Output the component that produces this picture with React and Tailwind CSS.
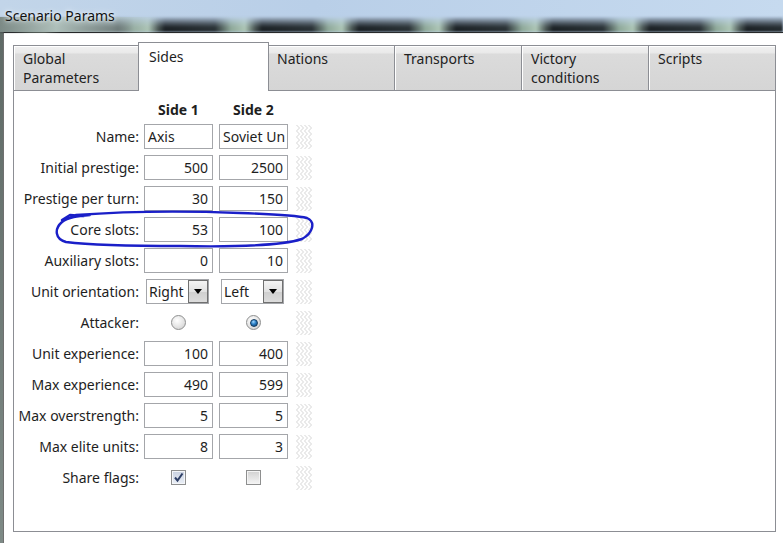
import React from 'react';

const tabs = [
    { id: 'global', lines: ['Global', 'Parameters'] },
    { id: 'sides', lines: ['Sides'] },
    { id: 'nations', lines: ['Nations'] },
    { id: 'transports', lines: ['Transports'] },
    { id: 'victory', lines: ['Victory', 'conditions'] },
    { id: 'scripts', lines: ['Scripts'] },
];

const rows = [
    { label: 'Name:', type: 'text', a: 'Axis', b: 'Soviet Un' },
    { label: 'Initial prestige:', type: 'num', a: '500', b: '2500' },
    { label: 'Prestige per turn:', type: 'num', a: '30', b: '150' },
    { label: 'Core slots:', type: 'num', a: '53', b: '100' },
    { label: 'Auxiliary slots:', type: 'num', a: '0', b: '10' },
    { label: 'Unit orientation:', type: 'select', a: 'Right', b: 'Left' },
    { label: 'Attacker:', type: 'radio', a: false, b: true },
    { label: 'Unit experience:', type: 'num', a: '100', b: '400' },
    { label: 'Max experience:', type: 'num', a: '490', b: '599' },
    { label: 'Max overstrength:', type: 'num', a: '5', b: '5' },
    { label: 'Max elite units:', type: 'num', a: '8', b: '3' },
    { label: 'Share flags:', type: 'check', a: true, b: false },
];

const Grip = () => (
    <svg width="18" height="25" viewBox="0 0 18 25" className="block">
        {[3, 7, 11, 15].map((x) => (
            <polyline
                key={x}
                points={Array.from({ length: 9 }, (_, i) => `${x + (i % 2 ? 1.5 : -1.5)},${1 + i * 3}`).join(' ')}
                fill="none"
                stroke="#d6d6d6"
                strokeWidth="1"
            />
        ))}
    </svg>
);

const TextBox = ({ value, left }) => (
    <div
        className={`h-[25px] w-[69px] border border-[#a4a6aa] bg-white overflow-hidden whitespace-nowrap leading-[23px] ${left ? 'pl-[3px] text-left' : 'pr-[4px] text-right'}`}
    >
        {value}
    </div>
);

const Select = ({ value }) => (
    <div className="pl-[2px] pr-[4px]">
        <div className="h-[25px] w-[63px] border border-[#a4a6aa] bg-white flex items-stretch">
            <div className="flex-1 pl-[2px] leading-[23px] overflow-hidden whitespace-nowrap">{value}</div>
            <div className="w-[20px] border border-[#707070] bg-[linear-gradient(#f4f4f4,#e2e2e2_50%,#cfcfcf_51%,#dcdcdc)] flex items-center justify-center">
                <svg width="8" height="5" viewBox="0 0 8 5">
                    <path d="M0 0 H8 L4 5 Z" fill="#000" />
                </svg>
            </div>
        </div>
    </div>
);

const Radio = ({ checked }) => (
    <div className="w-[69px] flex justify-center">
        <div className="w-[15px] h-[15px] rounded-full border border-[#8e8f8f] bg-[radial-gradient(circle_at_40%_35%,#ffffff,#e4e4e4_55%,#c9c9c9)] flex items-center justify-center">
            {checked && (
                <div className="w-[8px] h-[8px] rounded-full bg-[radial-gradient(circle_at_40%_30%,#9fd6ff,#2a7fc6_45%,#0c3a68)] border border-[#133b60]" />
            )}
        </div>
    </div>
);

const Check = ({ checked }) => (
    <div className="w-[69px] flex justify-center">
        <div className={`w-[15px] h-[15px] border border-[#8e8f8f] p-[1px] ${checked ? 'bg-[#f4f6f9]' : 'bg-[#f4f4f4]'}`}>
            <div className={`w-full h-full flex items-center justify-center ${checked ? 'bg-[linear-gradient(#cbd3e2,#e8edf5)]' : 'bg-[linear-gradient(#d4d4d4,#f2f2f2)]'}`}>
                {checked && (
                    <svg width="11" height="11" viewBox="0 0 11 11">
                        <path d="M2 5.5 L4.5 8.5 L9.5 1.5" fill="none" stroke="#2e3f66" strokeWidth="2" />
                    </svg>
                )}
            </div>
        </div>
    </div>
);

const Cell = ({ row, v }) => {
    if (row.type === 'text') return <TextBox value={v} left />;
    if (row.type === 'num') return <TextBox value={v} />;
    if (row.type === 'select') return <Select value={v} />;
    if (row.type === 'radio') return <Radio checked={v} />;
    return <Check checked={v} />;
};

export default function App() {
    return (
        <div className="relative w-[783px] h-[543px] overflow-hidden bg-white font-['Noto_Sans',sans-serif] text-[14px] text-[#1e1e1e] flex flex-col">
            {/* title bar */}
            <div className="relative h-[32px] shrink-0 bg-[linear-gradient(90deg,#c2d5e9,#b9cfe8_40%,#c6daef_100%)]">
                <div className="absolute left-0 right-0 bottom-0 h-[15px] bg-[linear-gradient(rgba(188,209,233,0.9),rgba(188,209,233,0.25)_45%,rgba(188,209,233,0)_70%),repeating-linear-gradient(90deg,#1c2226_0px,#2a3236_50px,#8fa99a_66px,#adc6b6_80px,#4a5654_90px,#1c2226_97px)] bg-position-[68px_0] blur-[1px]" />
                <div className="absolute left-0 bottom-0 w-[160px] h-[15px] bg-[linear-gradient(90deg,#7c8a86,#aebfba_35%,rgba(174,191,186,0.6)_70%,rgba(174,191,186,0))]" />
                <div className="relative pl-[5px] pt-[6px] leading-[20px] text-[#111] [text-shadow:0_0_6px_#e8f0f8,0_0_3px_#e8f0f8]">Scenario Params</div>
            </div>

            <div className="flex-1 flex">
                <div className="w-[3px] bg-[linear-gradient(#5f6a66,#7e8a86)]" />
                <div className="flex-1 border-l border-t border-l-[#707070] border-t-[#2a2a2a] bg-white pl-[9px] pr-[7px] pt-[9px] flex flex-col">
                    {/* tab strip */}
                    <div className="flex items-end h-[48px]">
                        {tabs.map((t, i) => {
                            const sel = t.id === 'sides';
                            return sel ? (
                                <div
                                    key={t.id}
                                    className="relative z-10 -mx-[2px] -mb-px w-[131px] h-[49px] border border-b-0 border-[#8c8e94] bg-white pl-[10px] pt-[4px] leading-[19px]"
                                >
                                    {t.lines.map((l) => <div key={l}>{l}</div>)}
                                </div>
                            ) : (
                                <div
                                    key={t.id}
                                    className={`h-[45px] ${i === tabs.length - 1 ? 'w-[128px] border-r' : 'w-[127px]'} border-t border-l border-[#8c8e94] bg-[linear-gradient(#f1f1f1,#e9e9e9_16%,#dbdbdb_18%,#d5d5d5)] shadow-[inset_1px_1px_0_#ffffff] pl-[9px] pt-[3px] leading-[19px] text-[#222]`}
                                >
                                    {t.lines.map((l) => <div key={l}>{l}</div>)}
                                </div>
                            );
                        })}
                    </div>

                    {/* panel */}
                    <div className="h-[442px] border border-[#8c8e94] bg-white pt-[9px]">
                        <div className="flex h-[20px] items-center font-bold leading-[20px]">
                            <div className="w-[125px]" />
                            <div className="ml-[5px] w-[69px] text-center">Side 1</div>
                            <div className="ml-[6px] w-[69px] text-center">Side 2</div>
                        </div>
                        <div className="mt-[4px] flex flex-col gap-[6px]">
                            {rows.map((r) => (
                                <div key={r.label} className="flex h-[25px] items-center">
                                    <div className="w-[125px] text-right whitespace-nowrap">{r.label}</div>
                                    <div className="ml-[5px] w-[69px]"><Cell row={r} v={r.a} /></div>
                                    <div className="ml-[6px] w-[69px]"><Cell row={r} v={r.b} /></div>
                                    <div className="ml-[7px]"><Grip /></div>
                                </div>
                            ))}
                        </div>
                    </div>
                </div>
            </div>

            {/* hand-drawn highlight over Core slots */}
            <svg className="absolute inset-0 pointer-events-none" width="783" height="543" viewBox="0 0 783 543">
                <path
                    d="M62 220 L70 215 L84 216 M76 215 C130 211 190 211 240 213 C270 214 295 215 307 218 C316 222 313 233 302 239 C280 246 230 247 180 246 C130 246 90 245 66 242 C55 239 54 229 62 222 C68 217 78 216 90 215"
                    fill="none"
                    stroke="#1a1fc8"
                    strokeWidth="2.4"
                    strokeLinecap="round"
                    strokeLinejoin="round"
                />
            </svg>
        </div>
    );
}
